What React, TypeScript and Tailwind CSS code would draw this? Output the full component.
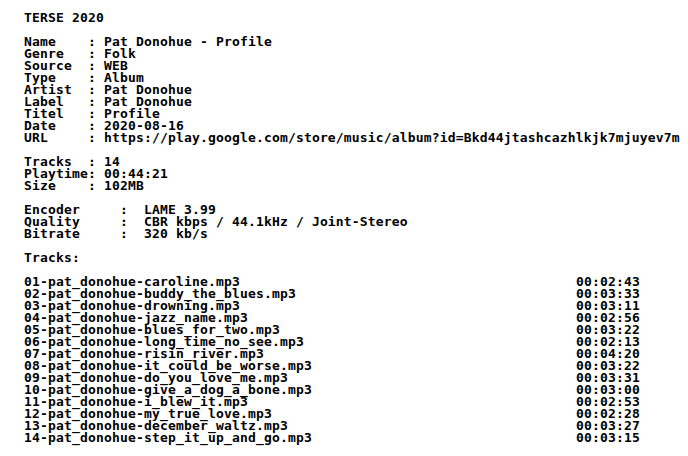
import React from "react";

const header = [
  "TERSE 2020",
  "",
  "Name    : Pat Donohue - Profile",
  "Genre   : Folk",
  "Source  : WEB",
  "Type    : Album",
  "Artist  : Pat Donohue",
  "Label   : Pat Donohue",
  "Titel   : Profile",
  "Date    : 2020-08-16",
  "URL     : https://play.google.com/store/music/album?id=Bkd44jtashcazhlkjk7mjuyev7m",
  "",
  "Tracks  : 14",
  "Playtime: 00:44:21",
  "Size    : 102MB",
  "",
  "Encoder     :  LAME 3.99",
  "Quality     :  CBR kbps / 44.1kHz / Joint-Stereo",
  "Bitrate     :  320 kb/s",
  "",
  "Tracks:",
  "",
];

const tracks: [string, string][] = [
  ["01-pat_donohue-caroline.mp3", "00:02:43"],
  ["02-pat_donohue-buddy_the_blues.mp3", "00:03:33"],
  ["03-pat_donohue-drowning.mp3", "00:03:11"],
  ["04-pat_donohue-jazz_name.mp3", "00:02:56"],
  ["05-pat_donohue-blues_for_two.mp3", "00:03:22"],
  ["06-pat_donohue-long_time_no_see.mp3", "00:02:13"],
  ["07-pat_donohue-risin_river.mp3", "00:04:20"],
  ["08-pat_donohue-it_could_be_worse.mp3", "00:03:22"],
  ["09-pat_donohue-do_you_love_me.mp3", "00:03:31"],
  ["10-pat_donohue-give_a_dog_a_bone.mp3", "00:03:00"],
  ["11-pat_donohue-i_blew_it.mp3", "00:02:53"],
  ["12-pat_donohue-my_true_love.mp3", "00:02:28"],
  ["13-pat_donohue-december_waltz.mp3", "00:03:27"],
  ["14-pat_donohue-step_it_up_and_go.mp3", "00:03:15"],
];

export default function App() {
  return (
    <div
      className="w-[688px] h-[456px] overflow-hidden bg-white text-black pl-[24px] pt-[12px] font-bold text-[13px] leading-[12px] tracking-[0.17px]"
      style={{ fontFamily: '"DejaVu Sans Mono", monospace' }}
    >
      {header.map((l, i) => (
        <div key={i} className="h-[12px] whitespace-pre">
          {l}
        </div>
      ))}
      <div className="grid grid-cols-[552px_auto]">
        {tracks.map(([n, t]) => (
          <React.Fragment key={n}>
            <div className="h-[12px] whitespace-pre">{n}</div>
            <div className="h-[12px] whitespace-pre">{t}</div>
          </React.Fragment>
        ))}
      </div>
    </div>
  );
}
